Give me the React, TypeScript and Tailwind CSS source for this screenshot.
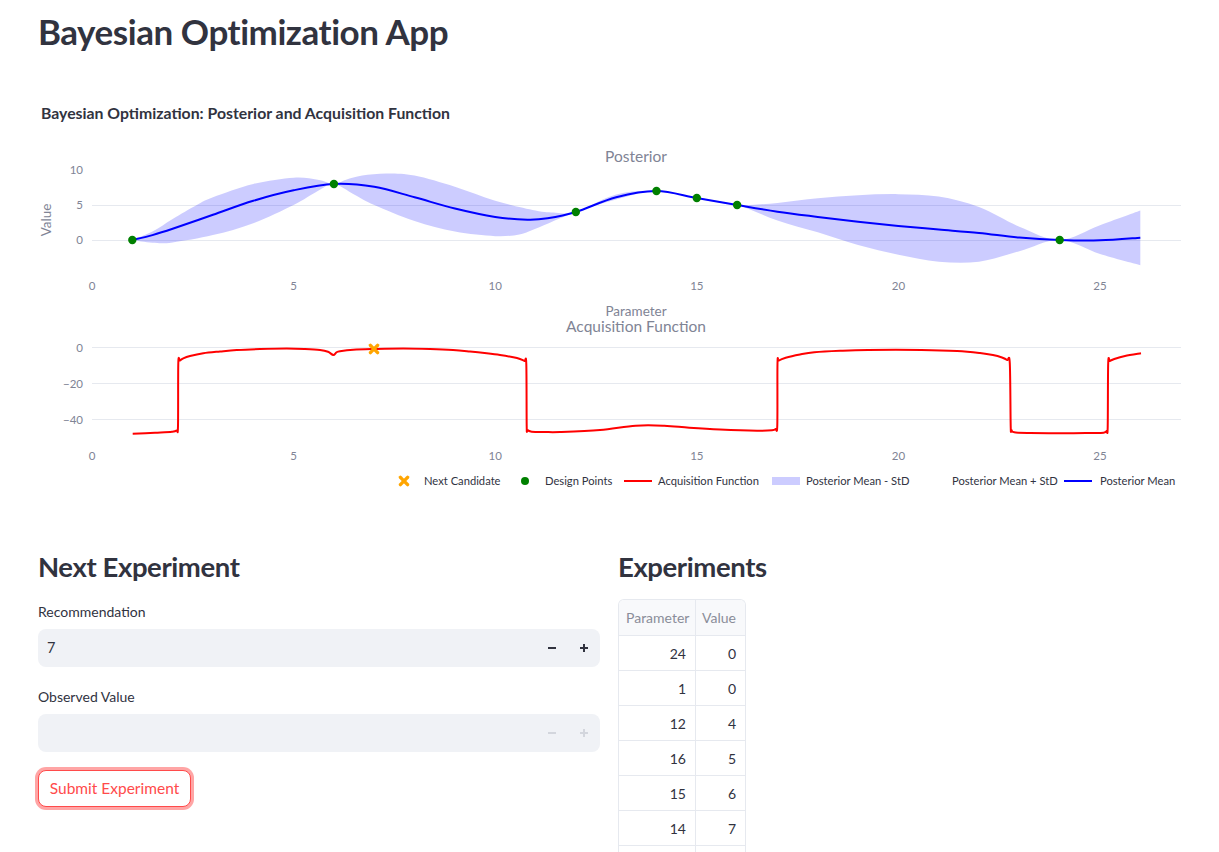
import React from "react";

type P = [number, number];

const X = (v: number) => 92 + 40.32 * v;
const YP = (v: number) => 240 - 7 * v;

function seg(pts: P[]): string {
  let d = "";
  for (let i = 0; i < pts.length - 1; i++) {
    const p0 = pts[i - 1] || pts[i];
    const p1 = pts[i];
    const p2 = pts[i + 1];
    const p3 = pts[i + 2] || p2;
    const c1x = p1[0] + (p2[0] - p0[0]) / 6;
    const c1y = p1[1] + (p2[1] - p0[1]) / 6;
    const c2x = p2[0] - (p3[0] - p1[0]) / 6;
    const c2y = p2[1] - (p3[1] - p1[1]) / 6;
    d += ` C${c1x.toFixed(2)},${c1y.toFixed(2)} ${c2x.toFixed(2)},${c2y.toFixed(2)} ${p2[0].toFixed(2)},${p2[1].toFixed(2)}`;
  }
  return d;
}
function smooth(pts: P[]): string {
  return `M${pts[0][0].toFixed(2)},${pts[0][1].toFixed(2)}` + seg(pts);
}
const toPx = (arr: P[]): P[] => arr.map(([a, b]) => [X(a), YP(b)]);

const mean: P[] = toPx([
  [1, 0], [1.5, 0.7], [2, 1.6], [3, 3.6], [4, 5.6], [5, 7.1], [6, 8], [7, 7.6], [8, 6.1], [9, 4.5],
  [10, 3.3], [10.8, 2.9], [11.3, 3.1], [12, 4], [13, 6.1], [14, 7], [15, 6], [16, 5], [17, 4.05],
  [18, 3.3], [19, 2.6], [20, 2.0], [21, 1.5], [22, 1.0], [23, 0.35], [24, 0], [25, -0.05], [26, 0.33],
]);
const upper: P[] = toPx([
  [1, 0], [1.5, 1.2], [2, 3.0], [2.6, 5.0], [3, 6.1], [4, 8.0], [5, 8.9], [5.6, 8.6], [6, 8], [6.3, 8.6],
  [6.7, 9.2], [7.3, 9.5], [8, 9.2], [9, 7.6], [10, 5.6], [11, 4.2], [11.5, 3.9], [12, 4], [13, 6.5],
  [14, 7], [15, 6], [16, 5], [17, 5.3], [18, 5.95], [19, 6.4], [20, 6.55], [21, 6.2], [22, 4.7],
  [23, 1.9], [24, 0], [25, 2.1], [26, 4.2],
]);
const lower: P[] = toPx([
  [1, 0], [1.5, -0.4], [2, -0.35], [3, 0.7], [4, 2.4], [5, 5.0], [5.6, 7.0], [6, 8], [6.5, 6.5],
  [7, 5.0], [8, 2.7], [9, 1.2], [10, 0.55], [10.6, 0.8], [11, 1.6], [12, 4], [13, 5.8], [14, 7],
  [15, 6], [16, 5], [17, 2.8], [18, 1.1], [19, -0.7], [20, -2.1], [21, -3.1], [22, -3.1], [23, -1.6],
  [24, 0], [25, -2.0], [26, -3.6],
]);
const lowerRev = [...lower].reverse();
const bandPath =
  smooth(upper) +
  ` L${lowerRev[0][0].toFixed(2)},${lowerRev[0][1].toFixed(2)}` +
  seg(lowerRev) +
  " Z";

const acq: P[] = [
  [132.7, 433.7], [155, 432.7], [172, 431.8], [176.5, 430.5], [178, 426], [178.3, 363.3], [180, 360.5],
  [183.3, 358.3], [190, 356], [203.3, 353.3], [220, 351.5], [236.7, 350], [260, 349], [286.7, 348.5],
  [305, 349], [320, 350], [328, 351.8], [333.3, 355], [336.5, 352.3], [340, 351.2], [353.3, 349.7],
  [374, 349], [403.3, 348.5], [430, 349], [453, 350], [470, 351.5], [486.7, 353.3], [500, 355],
  [513.3, 357.3], [520, 359], [524.5, 361], [526.3, 364], [526.7, 426], [527.5, 430], [531.7, 431.7],
  [545, 432], [560, 432], [600, 430], [635.7, 425.7], [664.3, 425.7], [689.3, 427.7], [720, 429.5],
  [757.1, 430.7], [772, 430.3], [775.5, 429], [777.3, 425], [777.5, 363.3], [779, 360.5], [785.7, 357.7],
  [800, 354.5], [814.3, 352.3], [840, 350.8], [867.9, 350], [921.4, 350], [957.1, 351], [980, 353],
  [992.9, 355], [1002, 357.5], [1007.1, 360], [1009.8, 363.3], [1010.7, 426], [1011.5, 430],
  [1014.3, 432.3], [1030, 433], [1064.3, 433.3], [1090, 433], [1103.6, 432.7], [1106.5, 431],
  [1107.7, 427], [1108.2, 363.3], [1110, 361], [1114.3, 359], [1125, 356], [1141, 353.3],
];

const design: P[] = [
  [1, 0], [6, 8], [12, 4], [14, 7], [15, 6], [16, 5], [24, 0],
];

const tickColor = "#808495";
const gridColor = "#e6e9ef";
const FONT = "Lato, 'Liberation Sans', sans-serif";

function XMark({ cx, cy, s = 4 }: { cx: number; cy: number; s?: number }) {
  return (
    <g stroke="#ffa500" strokeWidth={3.4} strokeLinecap="round">
      <line x1={cx - s} y1={cy - s} x2={cx + s} y2={cy + s} />
      <line x1={cx - s} y1={cy + s} x2={cx + s} y2={cy - s} />
    </g>
  );
}

function Chart() {
  const xt = [0, 5, 10, 15, 20, 25];
  return (
    <svg
      width={1143}
      height={420}
      viewBox="38 80 1143 420"
      className="block"
      style={{ fontFamily: FONT }}
    >
      <text x={41} y={119} fontSize={15} fontWeight={700} fill="#31333F" textLength={409} lengthAdjust="spacingAndGlyphs">
        Bayesian Optimization: Posterior and Acquisition Function
      </text>

      {/* Posterior subplot */}
      <text x={636} y={162} fontSize={15.5} fill={tickColor} textAnchor="middle">Posterior</text>
      <line x1={92} x2={1181} y1={205.5} y2={205.5} stroke={gridColor} strokeWidth={1} />
      <line x1={92} x2={1181} y1={240.5} y2={240.5} stroke={gridColor} strokeWidth={1} />
      {[10, 5, 0].map((v) => (
        <text key={v} x={83} y={YP(v) + 4} fontSize={11.5} fill={tickColor} textAnchor="end">{v}</text>
      ))}
      <text x={0} y={0} fontSize={13.5} fill={tickColor} textAnchor="middle" transform="translate(51,220) rotate(-90)">Value</text>
      {xt.map((v) => (
        <text key={v} x={X(v)} y={290} fontSize={11.5} fill={tickColor} textAnchor="middle">{v}</text>
      ))}
      <text x={636} y={315.5} fontSize={13.5} fill={tickColor} textAnchor="middle">Parameter</text>

      <path d={bandPath} fill="rgba(0,0,255,0.2)" stroke="none" />
      <path d={smooth(mean)} fill="none" stroke="#0000ff" strokeWidth={2} />
      {design.map(([a, b]) => (
        <circle key={a} cx={X(a)} cy={YP(b)} r={4.2} fill="#008000" />
      ))}

      {/* Acquisition subplot */}
      <text x={636} y={332} fontSize={15.5} fill={tickColor} textAnchor="middle">Acquisition Function</text>
      {[347.5, 383.5, 419.5].map((y) => (
        <line key={y} x1={92} x2={1181} y1={y} y2={y} stroke={gridColor} strokeWidth={1} />
      ))}
      {[
        ["0", 347.5],
        ["\u221220", 383.5],
        ["\u221240", 419.5],
      ].map(([t, y]) => (
        <text key={t as string} x={83} y={(y as number) + 4} fontSize={11.5} fill={tickColor} textAnchor="end">{t}</text>
      ))}
      {xt.map((v) => (
        <text key={v} x={X(v)} y={460} fontSize={11.5} fill={tickColor} textAnchor="middle">{v}</text>
      ))}
      <path d={smooth(acq)} fill="none" stroke="#ff0000" strokeWidth={2} strokeLinejoin="round" />
      <XMark cx={374} cy={349} s={3.6} />

      {/* Legend */}
      <g fontSize={11.2} fill="#31333F">
        <XMark cx={404} cy={481} s={3.6} />
        <text x={424} y={485}>Next Candidate</text>
        <circle cx={525} cy={481} r={4} fill="#008000" />
        <text x={545} y={485}>Design Points</text>
        <line x1={624} x2={652} y1={481} y2={481} stroke="#ff0000" strokeWidth={2} />
        <text x={658} y={485}>Acquisition Function</text>
        <rect x={772} y={477} width={28} height={8} fill="rgba(0,0,255,0.2)" />
        <text x={806} y={485}>Posterior Mean - StD</text>
        <text x={952} y={485}>Posterior Mean + StD</text>
        <line x1={1064} x2={1092} y1={481} y2={481} stroke="#0000ff" strokeWidth={2} />
        <text x={1100} y={485}>Posterior Mean</text>
      </g>
    </svg>
  );
}

function Minus({ color }: { color: string }) {
  return (
    <svg width="10" height="10" viewBox="0 0 10 10">
      <line x1="1" y1="5" x2="9" y2="5" stroke={color} strokeWidth="2" />
    </svg>
  );
}
function Plus({ color }: { color: string }) {
  return (
    <svg width="10" height="10" viewBox="0 0 10 10">
      <line x1="1" y1="5" x2="9" y2="5" stroke={color} strokeWidth="2" />
      <line x1="5" y1="1" x2="5" y2="9" stroke={color} strokeWidth="2" />
    </svg>
  );
}

function NumberInput({ value, disabled }: { value?: string; disabled?: boolean }) {
  const c = disabled ? "#d3d6dd" : "#31333F";
  return (
    <div className="flex h-[38px] items-center rounded-[8px] bg-[#f0f2f6]">
      <div className="flex-1 pl-[9px] text-[14.5px] text-[#31333F]">{value}</div>
      <div className="flex h-full w-[32px] items-center justify-center">
        <Minus color={c} />
      </div>
      <div className="flex h-full w-[32px] items-center justify-center">
        <Plus color={c} />
      </div>
    </div>
  );
}

const rows: [number, number][] = [
  [24, 0],
  [1, 0],
  [12, 4],
  [16, 5],
  [15, 6],
  [14, 7],
];

export default function App() {
  return (
    <div
      className="h-[852px] w-[1219px] overflow-hidden bg-white text-[#31333F]"
      style={{ fontFamily: FONT }}
    >
      <div className="px-[38px]">
        <h1 className="pt-[10px] text-[35px] font-bold leading-[42px] tracking-[-0.45px]">
          Bayesian Optimization App
        </h1>
        <div className="mt-[28px]">
          <Chart />
        </div>
        <div className="mt-[50px] grid grid-cols-[562px_562px] gap-[18px]">
          <div>
            <h2 className="text-[27.5px] font-bold leading-[34px] tracking-[-0.4px]">Next Experiment</h2>
            <div className="mt-[18px] text-[14px] leading-[20px]">Recommendation</div>
            <div className="mt-[7px]">
              <NumberInput value="7" />
            </div>
            <div className="mt-[20px] text-[14px] leading-[20px]">Observed Value</div>
            <div className="mt-[7px]">
              <NumberInput disabled />
            </div>
            <div className="mt-[18px]">
              <button className="flex h-[37px] w-[153px] items-center justify-center rounded-[8px] border border-[#ff4b4b] bg-white text-[15.5px] text-[#ff4b4b] shadow-[0_0_0_3px_rgba(255,75,75,0.5)]">
                Submit Experiment
              </button>
            </div>
          </div>
          <div>
            <h2 className="text-[27.5px] font-bold leading-[34px] tracking-[-0.4px]">Experiments</h2>
            <div className="mt-[15px] w-[128px] overflow-hidden rounded-t-[6px] border border-b-0 border-[#e6e9ef] text-[14px]">
              <div className="flex h-[36px] border-b border-[#e6e9ef] bg-[#f8f9fb] text-[#8a8d99]">
                <div className="flex w-[77px] items-center border-r border-[#e6e9ef] pl-[7px]">Parameter</div>
                <div className="flex flex-1 items-center pl-[6px]">Value</div>
              </div>
              {rows.map(([p, v]) => (
                <div key={p} className="flex h-[35px] border-b border-[#e6e9ef]">
                  <div className="flex w-[77px] items-center justify-end border-r border-[#e6e9ef] pr-[9px]">{p}</div>
                  <div className="flex flex-1 items-center justify-end pr-[9px]">{v}</div>
                </div>
              ))}
              <div className="flex h-[35px]">
                <div className="w-[77px] border-r border-[#e6e9ef]" />
                <div className="flex-1" />
              </div>
            </div>
          </div>
        </div>
      </div>
    </div>
  );
}
